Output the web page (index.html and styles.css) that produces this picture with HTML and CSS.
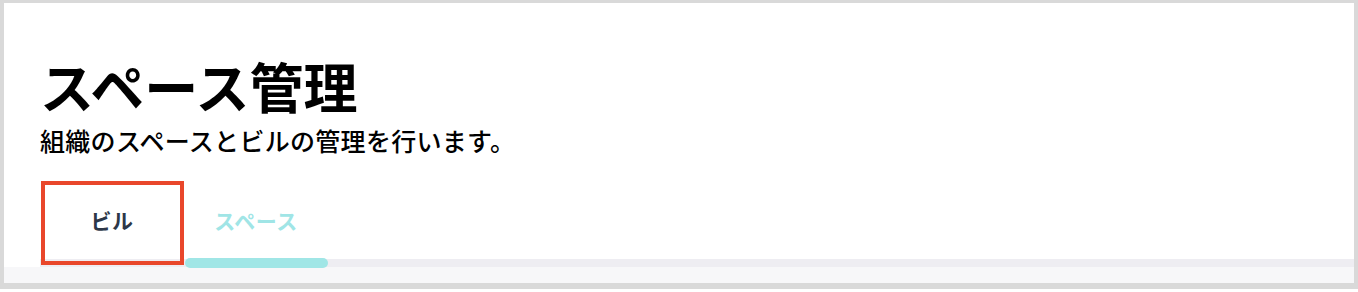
FILE: index.html
```html
<!DOCTYPE html>
<html lang="ja">
<head>
<meta charset="utf-8">
<title>スペース管理</title>
<link rel="stylesheet" href="styles.css">
</head>
<body>
<div class="frame">
  <div class="content">
    <h1 class="title">スペース管理</h1>
    <p class="subtitle">組織のスペースとビルの管理を行います。</p>
    <div class="tabs">
      <div class="tab">ビル</div>
      <div class="tab tab-active">スペース</div>
      <div class="highlight"></div>
    </div>
    <div class="track"><div class="indicator"></div></div>
  </div>
  <div class="bottom"></div>
</div>
</body>
</html>
```

FILE: styles.css
```css
html, body {
  margin: 0;
  padding: 0;
  background: #ffffff;
}
body {
  font-family: "Noto Sans CJK JP", "Noto Sans", sans-serif;
  color: #000;
  height: 292px;
  overflow: hidden;
}
.frame {
  border-style: solid;
  border-color: #d9d9d9;
  border-width: 3px 4px 6px 4px;
  background: #ffffff;
}
.content {
  padding: 56px 0 0 36px;
}
.title {
  margin: 0;
  font-size: 54px;
  line-height: 53px;
  font-weight: 700;
  color: #000;
}
.subtitle {
  margin: 16px 0 0 0;
  font-size: 25px;
  line-height: 25px;
  font-weight: 500;
  letter-spacing: 0.3px;
  color: #000;
}
.tabs {
  position: relative;
  display: flex;
  margin-top: 28px;
  height: 78px;
}
.tab {
  width: 144px;
  display: flex;
  align-items: center;
  justify-content: center;
  font-size: 21px;
  font-weight: 700;
  color: #2d3748;
  letter-spacing: 0.5px;
}
.tab-active {
  color: #a0e5e6;
}
.highlight {
  position: absolute;
  left: 1px;
  top: 0;
  width: 143px;
  height: 84px;
  box-sizing: border-box;
  border: 4px solid #e9472b;
  pointer-events: none;
}
.track {
  height: 8px;
  background: #eeedf2;
  display: flex;
  align-items: center;
}
.indicator {
  margin-left: 145px;
  width: 143px;
  height: 10px;
  flex-shrink: 0;
  border-radius: 5px;
  background: #a0e6e6;
}
.bottom {
  height: 16px;
  background: #f7f7f9;
}
```
